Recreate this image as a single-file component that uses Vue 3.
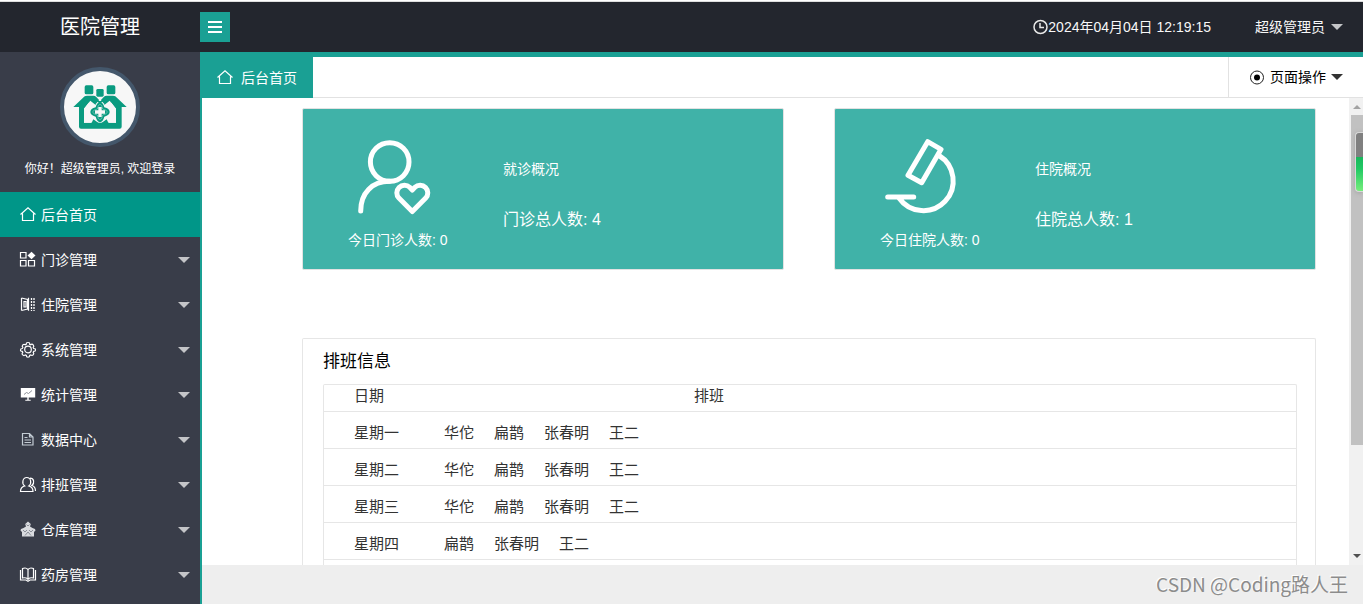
<script setup>
import { ref } from 'vue'

const menu = [
  { icon: 'home', label: '后台首页' },
  { icon: 'grid', label: '门诊管理', sub: true },
  { icon: 'ward', label: '住院管理', sub: true },
  { icon: 'gear', label: '系统管理', sub: true },
  { icon: 'board', label: '统计管理', sub: true },
  { icon: 'doc', label: '数据中心', sub: true },
  { icon: 'users', label: '排班管理', sub: true },
  { icon: 'depot', label: '仓库管理', sub: true },
  { icon: 'book', label: '药房管理', sub: true },
]
const active = ref('后台首页')

const cards = [
  { icon: 'patient', today: '今日门诊人数: 0', title: '就诊概况', total: '门诊总人数: 4' },
  { icon: 'microscope', today: '今日住院人数: 0', title: '住院概况', total: '住院总人数: 1' },
]

const shifts = [
  { day: '星期一', names: ['华佗', '扁鹊', '张春明', '王二'] },
  { day: '星期二', names: ['华佗', '扁鹊', '张春明', '王二'] },
  { day: '星期三', names: ['华佗', '扁鹊', '张春明', '王二'] },
  { day: '星期四', names: ['扁鹊', '张春明', '王二'] },
]
</script>

<template>
  <div class="page">
    <header class="topbar">
      <h1 class="brand">医院管理</h1>
      <button class="toggle" type="button" aria-label="菜单">
        <svg width="16" height="14" viewBox="0 0 16 14"><path d="M1 2h14M1 7h14M1 12h14" stroke="#fff" stroke-width="2" /></svg>
      </button>
      <div class="clock">
        <svg class="clock-icon" viewBox="0 0 16 16"><circle cx="8.500" cy="8" r="6.500" /><path d="M8 4v4.500h4" /></svg>
        <time>2024年04月04日 12:19:15</time>
      </div>
      <button class="account" type="button">超级管理员<span class="caret"></span></button>
    </header>

    <div class="body">
      <aside class="side">
        <div class="profile">
          <div class="avatar">
            <svg viewBox="0 0 216 216" width="72" height="72">
              <g fill="#0a9b80">
                <rect x="62" y="43" width="26" height="27" rx="5" />
                <rect x="97" y="54" width="22" height="23" rx="4" />
                <rect x="128" y="43" width="26" height="27" rx="5" />
                <path d="M28 108 62 76q3-2 7-2h20q4 0 7 3l12 13 12-13q3-3 7-3h20q4 0 7 2l34 32h-15v59q0 6-6 6H51q-6 0-6-6v-59z" />
                <path d="M60 155V113l19-24 16 13v-3l13-14 13 14v3l16-13 19 24v42h-23l-5-10-20 14-20-14-5 10z" fill="#f7f7f7" />
                <path d="m60 113 14-18 10 8-3 52H60zM156 113l-14-18-10 8 3 52h21z" fill="#f7f7f7" />
                <path d="M93 155h30v6H93zM98 90h20l-10 8z" />
                <path d="M108 94q9 0 13 15 16 4 16 14t-16 14q-4 15-13 17-9-2-13-17-16-4-16-14t16-14q4-15 13-15z" />
              </g>
              <path d="M108 100q6 0 8 14 14 3 14 9t-14 9q-2 14-8 14t-8-14q-14-3-14-9t14-9q2-14 8-14z" fill="none" stroke="#f7f7f7" stroke-width="1" />
              <path d="M103 108h10v10h10v10h-10v10h-10v-10H93v-10h10z" fill="#f7f7f7" />
            </svg>
          </div>
          <p class="hello">你好！超级管理员, 欢迎登录</p>
        </div>
        <nav>
          <a v-for="m in menu" :key="m.label" href="#" class="item" :class="{ on: m.label === active }" @click.prevent="active = m.label">
            <svg class="ico" viewBox="0 0 16 16">
              <template v-if="m.icon === 'home'"><path d="M.5 7.500 8 .8 15.500 7.500M2.500 6.500v7h11v-7" /></template>
              <template v-else-if="m.icon === 'grid'">
                <path d="M.5.500h5.500v5.500H.5zM.5 8.500h5.500v5.500H.5zM8.500 8.500h6v5.500h-6z" /><path class="solid" d="m11.500-.3 4 3.800-4 3.800-4-3.800z" />
              </template>
              <template v-else-if="m.icon === 'ward'">
                <path d="M1.500 1v12.500M1.500 1 7.500 2.500V12l-6 1.500M4 4.500h2v5.500H4zM8.500.8v13" /><path d="M11.500 1v13M14 1v13" stroke-width="1.300" stroke-dasharray="2 1" />
              </template>
              <template v-else-if="m.icon === 'gear'">
                <circle cx="8" cy="7.500" r="3.300" />
                <path d="M6.300 2.300Q6 .5 8 .5t1.700 1.800l1 .5q1.300-1.300 2.500 0t0 2.700l.5 1q1.800-.1 1.800 1.400t-1.800 1.500l-.5 1q1.200 1.400 0 2.500t-2.600 0l-.9.500q0 1.800-1.700 1.800t-1.700-1.800l-.9-.5q-1.500 1.200-2.700 0t.1-2.500l-.5-1Q.5 9.500.5 8t1.800-1.500l.5-1q-1.200-1.400 0-2.600t2.600-.1z" />
              </template>
              <template v-else-if="m.icon === 'board'">
                <path class="solid" d="M.8 1h14.400v9.500H8.700v2.300h2v1H5.300v-1h2v-2.300H.8z" /><path class="ink" d="m4 7.500 2.500-2 2 1L12 3.500" />
              </template>
              <template v-else-if="m.icon === 'doc'"><path class="dim" d="M2.500 1.500h7l3.500 3.500v8H2.500zM9.500 1.500V5H13M4.500 5.500h3M4.500 8h6.500M4.500 10.500h6.500" /></template>
              <template v-else-if="m.icon === 'users'">
                <path d="M.5 14.500c0-3.500 1.500-4.800 4.200-5.500C1.500 6.500 2.500.5 6.800.5S12 6.500 8.800 9c2.700.7 4.200 2 4.200 5.500zM10 1.200c4 0 5 4.500 1.800 7.300 2.700.7 3.700 2.500 3.700 5.500" />
              </template>
              <template v-else-if="m.icon === 'depot'">
                <path class="solid dimfill" d="M8-.5 10.800 2 10 4.500 12.500 6l2.500 1 .5 1.500L14 10v4.500H2V10L.5 8.500 1 7l2.500-1L6 4.500 5.200 2z" />
                <path class="ink" d="m6.500 2.500 1.500 1.500L9.500 2.500M3 8l2 2 2-2M9 8l2 2 2-2M5 13.500l3-3.500 3 3.500" />
              </template>
              <template v-else><path d="M8 2.500Q6.500 1 5 1T2.500 1.500V11q3-.8 5.500 1 2.500-1.800 5.500-1V1.500Q12.500 1 11 1T8 2.500V13M.5 3v10H6l2 1.300 2-1.300h5.500V3" /></template>
            </svg>
            <span>{{ m.label }}</span>
            <span v-if="m.sub" class="caret"></span>
          </a>
        </nav>
      </aside>

      <main class="main">
        <div class="tabs">
          <a class="tab" href="#">
            <svg class="ico" viewBox="0 0 16 16"><path d="M.5 7.500 8 .8 15.500 7.500M2.500 6.500v7h11v-7" /></svg>
            后台首页
          </a>
          <button class="ops" type="button">
            <svg class="ops-icon" viewBox="0 0 16 16"><circle cx="8" cy="8.500" r="6.500" fill="none" stroke="#222" /><circle cx="8" cy="8.500" r="3" /></svg>
            页面操作<span class="caret dark"></span>
          </button>
        </div>

        <div class="frame">
          <div class="content">
            <div class="cards">
              <section v-for="c in cards" :key="c.title" class="card">
                <div class="figure">
                  <svg viewBox="0 0 100 84" class="big">
                    <template v-if="c.icon === 'patient'">
                      <circle cx="41.700" cy="26" r="19.300" />
                      <path d="M12.700 75C12.700 57 24 45.300 41.700 45.300" />
                      <path d="M64.300 75.500 50.900 62.100A7.640 7.640 0 0 1 61.700 51.300L64.300 54l2.600-2.700A7.640 7.640 0 0 1 77.700 62.100z" />
                    </template>
                    <template v-else>
                      <path d="M47.700 5.700 61 13.300 41.700 46.700 28 39.200z" />
                      <path d="M59 19.500A29.800 29.800 0 1 1 19 62M7.700 61h26" />
                    </template>
                  </svg>
                  <span>{{ c.today }}</span>
                </div>
                <div class="facts">
                  <h2>{{ c.title }}</h2>
                  <p>{{ c.total }}</p>
                </div>
              </section>
            </div>

            <section class="panel">
              <h2>排班信息</h2>
              <div class="sheet">
                <table>
                  <thead>
                    <tr><th class="day">日期</th><th class="mid">排班</th></tr>
                  </thead>
                  <tbody>
                    <tr v-for="s in shifts" :key="s.day">
                      <td class="day">{{ s.day }}</td>
                      <td><span v-for="n in s.names" :key="n" class="name">{{ n }}</span></td>
                    </tr>
                  </tbody>
                </table>
              </div>
            </section>
          </div>
          <div class="scroll">
            <span class="arrow up"></span>
            <span class="thumb"></span>
            <span class="arrow down"></span>
            <span class="gauge"></span>
          </div>
        </div>
        <footer class="foot">CSDN @Coding路人王</footer>
      </main>
    </div>
  </div>
</template>

<style>
body {
  margin: 0;
  overflow: hidden;
}
</style>

<style scoped>
* {
  box-sizing: border-box;
}
.page {
  height: 100vh;
  display: flex;
  flex-direction: column;
  padding-top: 1px;
  background: #fff;
  font: 14px/20px "Liberation Sans", "Noto Sans CJK SC", sans-serif;
  color: #333;
}
h1, h2, p {
  margin: 0;
  font-weight: 400;
}
button {
  border: 0;
  padding: 0;
  background: none;
  font: inherit;
  color: inherit;
  cursor: pointer;
}
a {
  color: inherit;
  text-decoration: none;
}
.caret {
  border: 6px solid transparent;
  border-top-color: #c4c5c8;
  border-bottom: 0;
}
.caret.dark {
  border-top-color: #333;
}
.topbar {
  flex: none;
  display: flex;
  align-items: center;
  height: 51px;
  padding-right: 20px;
  border-top: 1px solid #dedede;
  background: #23262e;
  color: #f8f8f8;
}
.brand {
  width: 200px;
  text-align: center;
  font-size: 20px;
  line-height: 30px;
  color: #fff;
}
.toggle {
  display: flex;
  align-items: center;
  justify-content: center;
  width: 30px;
  height: 30px;
  background: #1aa094;
}
.clock {
  display: flex;
  align-items: center;
  margin-left: auto;
}
.clock-icon {
  width: 16px;
  height: 16px;
  fill: none;
  stroke: #e8e8e8;
  stroke-width: 1.5;
}
.account {
  display: flex;
  align-items: center;
  gap: 6px;
  margin-left: 44px;
}
.body {
  flex: 1;
  min-height: 0;
  display: flex;
}
.side {
  flex: none;
  width: 200px;
  background: #393d49;
  color: #fff;
}
.profile {
  display: flex;
  flex-direction: column;
  align-items: center;
  height: 140px;
  padding-top: 15px;
}
.avatar {
  width: 80px;
  height: 80px;
  border: 4px solid #44576b;
  border-radius: 50%;
  background: #f7f7f7;
}
.avatar svg {
  display: block;
}
.hello {
  margin-top: 12px;
  font-size: 12px;
  white-space: nowrap;
}
.item {
  display: flex;
  align-items: center;
  gap: 5px;
  height: 45px;
  padding: 0 10px 0 20px;
}
.item.on {
  background: #009688;
}
.item .caret {
  margin-left: auto;
}
.ico {
  flex: none;
  width: 16px;
  height: 16px;
  overflow: visible;
  fill: none;
  stroke: #fff;
  stroke-width: 1.2;
}
.solid {
  fill: #fff;
  stroke: none;
}
.dimfill {
  fill: #d8dade;
}
.ink {
  stroke: #8b8f98;
  stroke-width: 1;
}
.dim {
  stroke: #c3ccd4;
}
.main {
  flex: 1;
  min-width: 0;
  display: flex;
  flex-direction: column;
  border-top: 5px solid #1aa094;
  border-left: 2px solid #1aa094;
}
.tabs {
  flex: none;
  display: flex;
  height: 41px;
  border-bottom: 1px solid #e2e2e2;
}
.tab {
  display: flex;
  align-items: center;
  gap: 8px;
  height: 41px;
  padding: 0 16px 0 15px;
  background: #1aa094;
  color: #fff;
}
.ops {
  display: flex;
  align-items: center;
  gap: 5px;
  margin-left: auto;
  padding: 0 20px;
  border-left: 1px solid #e2e2e2;
  color: #000;
}
.ops-icon {
  width: 16px;
  height: 16px;
}
.frame {
  flex: 1;
  min-height: 0;
  display: flex;
}
.content {
  flex: 1;
  display: flex;
  flex-direction: column;
  min-width: 0;
  padding: 10px 33px 0 100px;
}
.cards {
  display: grid;
  grid-template-columns: 1fr 1fr;
  gap: 50px;
}
.card {
  display: flex;
  gap: 55px;
  padding: 27px 45px 19px;
  border: 1px solid #e2e2e2;
  border-radius: 2px;
  background: #40b2a8;
  color: #fff;
}
.figure {
  display: flex;
  flex-direction: column;
  gap: 10px;
  width: 100px;
  white-space: nowrap;
}
.big {
  width: 100px;
  height: 84px;
  fill: none;
  stroke: #fff;
  stroke-width: 5;
  stroke-linecap: round;
  stroke-linejoin: round;
}
.facts {
  display: flex;
  flex-direction: column;
  gap: 31px;
  padding-top: 23px;
}
.facts h2 {
  font-size: 14px;
}
.facts p {
  font-size: 16px;
}
.panel {
  flex: 1;
  display: flex;
  flex-direction: column;
  margin-top: 68px;
  padding: 10px 18px 0 20px;
  border: 1px solid #e6e6e6;
  border-bottom: 0;
  border-radius: 2px 2px 0 0;
}
.panel h2 {
  margin-bottom: 10px;
  font-size: 17px;
  line-height: 25px;
  color: #000;
}
.sheet {
  flex: 1;
  border: 1px solid #e6e6e6;
  border-bottom: 0;
  border-radius: 2px 2px 0 0;
}
table {
  width: 100%;
  border-collapse: separate;
  border-spacing: 0;
  font-size: 15px;
}
th, td {
  padding: 5px 0 0;
  height: 37px;
  border-bottom: 1px solid #e6e6e6;
  font-weight: 400;
  text-align: left;
}
th {
  padding: 0 0 4px;
  height: 27px;
}
.day {
  width: 120px;
  padding-left: 30px;
}
.mid {
  padding-left: 250px;
}
.name {
  margin-right: 20px;
}
.scroll {
  position: relative;
  flex: none;
  display: flex;
  flex-direction: column;
  align-items: center;
  width: 14px;
  padding: 7px 0;
  background: #f1f1f1;
}
.arrow {
  border: 4px solid transparent;
}
.up {
  border-top: 0;
  border-bottom-color: #a3a3a3;
  margin-left: 2px;
}
.down {
  border-bottom: 0;
  border-top-color: #505050;
  margin-top: auto;
  margin-left: 2px;
}
.thumb {
  align-self: stretch;
  flex: 0 1 330px;
  margin: 6px 0 0 2px;
  background: #c1c1c1;
}
.gauge {
  position: absolute;
  top: 34px;
  right: 0;
  width: 8px;
  height: 60px;
  border: 1px solid #d8d8d8;
  border-right: 0;
  border-radius: 4px 0 0 4px;
  background: linear-gradient(#808080 24px, #18b85c 24px, #22c964 36px, #76ee7c);
  box-shadow: 0 1px 4px #8888;
}
.foot {
  flex: none;
  height: 39px;
  padding-right: 15px;
  background: #eee;
  color: #8c8c8c;
  text-align: right;
  font: 19px/37px "Noto Sans CJK SC", sans-serif;
  text-shadow: -1px -1px 0 #fff;
}
</style>
